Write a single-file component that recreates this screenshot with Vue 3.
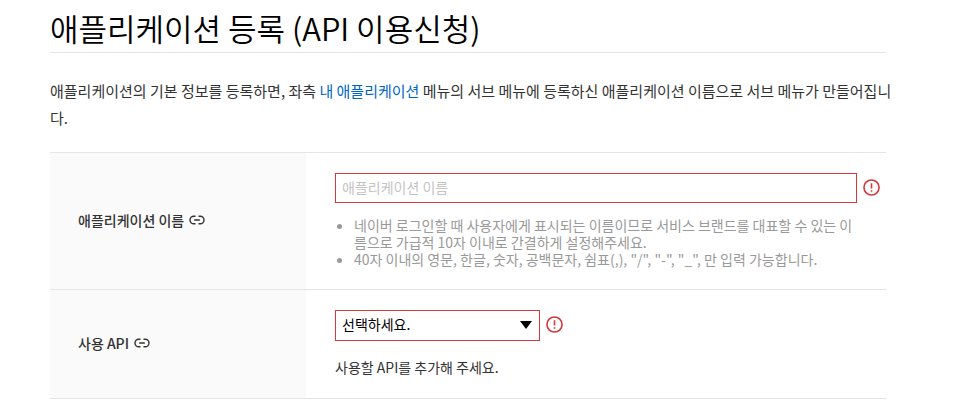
<script setup>
import { ref } from 'vue';

const appName = ref('');
const api = ref('');
</script>

<template>
  <main class="page">
    <h1 class="title">애플리케이션 등록 (API 이용신청)</h1>
    <p class="intro">
      애플리케이션의 기본 정보를 등록하면, 좌측 <a href="#">내 애플리케이션</a> 메뉴의 서브 메뉴에 등록하신 애플리케이션 이름으로 서브 메뉴가 만들어집니다.
    </p>

    <form class="form" @submit.prevent>
      <div class="row">
        <div class="head">
          <label for="app-name">애플리케이션 이름</label>
          <svg class="link-icon" viewBox="0 0 16 10">
            <path d="M6.5 1.2H4.8a3.8 3.8 0 0 0 0 7.6H6.5M9.5 1.2h1.7a3.8 3.8 0 0 1 0 7.6H9.5M5.2 5h5.6" />
          </svg>
        </div>
        <div class="body">
          <div class="field">
            <input id="app-name" v-model="appName" type="text" placeholder="애플리케이션 이름" />
            <svg class="error-icon" viewBox="0 0 16 16">
              <circle cx="8" cy="8" r="7.1" />
              <path d="M8 4v5M8 10.5v1.5" />
            </svg>
          </div>
          <ul class="help">
            <li>네이버 로그인할 때 사용자에게 표시되는 이름이므로 서비스 브랜드를 대표할 수 있는 이름으로 가급적 10자 이내로 간결하게 설정해주세요.</li>
            <li>40자 이내의 영문, 한글, 숫자, 공백문자, 쉼표(,), "/", "-", "_", 만 입력 가능합니다.</li>
          </ul>
        </div>
      </div>

      <div class="row">
        <div class="head">
          <label for="api">사용 API</label>
          <svg class="link-icon" viewBox="0 0 16 10">
            <path d="M6.5 1.2H4.8a3.8 3.8 0 0 0 0 7.6H6.5M9.5 1.2h1.7a3.8 3.8 0 0 1 0 7.6H9.5M5.2 5h5.6" />
          </svg>
        </div>
        <div class="body">
          <div class="field">
            <div class="select">
              <select id="api" v-model="api">
                <option value="">선택하세요.</option>
              </select>
              <svg class="arrow" viewBox="0 0 12 8"><path d="M0 0h12L6 8z" /></svg>
            </div>
            <svg class="error-icon" viewBox="0 0 16 16">
              <circle cx="8" cy="8" r="7.1" />
              <path d="M8 4v5M8 10.5v1.5" />
            </svg>
          </div>
          <p class="message">사용할 API를 추가해 주세요.</p>
        </div>
      </div>
    </form>
  </main>
</template>

<style>
body {
  margin: 0;
  background: #fff;
}
</style>

<style scoped>
.page {
  margin: 0 87px 0 50px;
  color: #333;
  font-family: "Noto Sans CJK KR", sans-serif;
  font-size: 14px;
}
.title {
  margin: 0;
  padding: 8px 0 4px;
  border-bottom: 1px solid #e5e5e5;
  color: #000;
  font-size: 31px;
  font-weight: 350;
  line-height: 40px;
}
.intro {
  margin: 24px -8px 21px 0;
  font-size: 15px;
  line-height: 27px;
  word-break: break-all;
}
.intro a {
  color: #0068c3;
  text-decoration: none;
}
.form {
  border-top: 1px solid #e5e5e5;
}
.row {
  display: flex;
  border-bottom: 1px solid #e5e5e5;
}
.head {
  display: flex;
  flex: 0 0 256px;
  align-items: center;
  gap: 5px;
  box-sizing: border-box;
  padding: 0 0 3px 28px;
  background: #fafafa;
  font-weight: 500;
}
.link-icon {
  width: 16px;
  height: 10px;
  fill: none;
  stroke: #333;
  stroke-width: 1.4;
}
.body {
  flex: 1;
  min-width: 0;
  padding: 20px 6px 20px 29px;
}
.field {
  display: flex;
  align-items: center;
  gap: 6px;
}
input,
select {
  box-sizing: border-box;
  height: 30px;
  margin: 0;
  padding: 0 6px 3px;
  border: 1px solid #d13b3b;
  border-radius: 0;
  background: #fff;
  color: #000;
  font: inherit;
}
input {
  flex: 1;
  min-width: 0;
}
input::placeholder {
  color: #c4c4c4;
}
.select {
  position: relative;
}
select {
  display: block;
  width: 205px;
  height: 31px;
  appearance: none;
}
.arrow {
  position: absolute;
  top: 11px;
  right: 8px;
  width: 12px;
  height: 8px;
  pointer-events: none;
}
.error-icon {
  flex: none;
  width: 17px;
  height: 17px;
  margin-bottom: 2px;
  fill: none;
  stroke: #d13b3b;
  stroke-width: 1.5;
}
.help {
  margin: 14px 24px 1px 0;
  padding-left: 19px;
  color: #999;
  line-height: 17px;
  word-break: break-all;
}
.message {
  margin: 15px 0 0;
  line-height: 22px;
}
</style>
